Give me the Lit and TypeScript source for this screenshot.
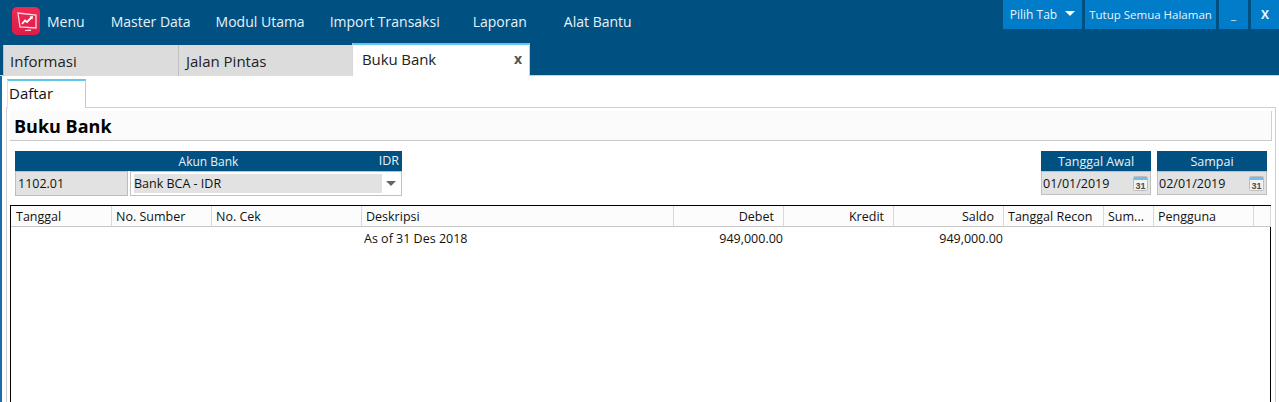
import { LitElement, html, css, svg } from "lit";
import { customElement } from "lit/decorators.js";

const columns = [
  { label: "Tanggal", w: 101 },
  { label: "No. Sumber", w: 100 },
  { label: "No. Cek", w: 150 },
  { label: "Deskripsi", w: 312 },
  { label: "Debet", w: 110, right: true },
  { label: "Kredit", w: 110, right: true },
  { label: "Saldo", w: 110, right: true },
  { label: "Tanggal Recon", w: 100 },
  { label: "Sum...", w: 50 },
  { label: "Pengguna", w: 100 },
  { label: "", w: 17 },
];

const calendar = svg`<svg class="cal" width="15" height="15" viewBox="0 0 15 15">
  <rect x="0.5" y="0.5" width="14" height="14" rx="1" fill="#f2f2f2" stroke="#bdbdbd"/>
  <rect x="1" y="1" width="13" height="3" fill="#74bdea"/>
  <text x="7.500" y="12.500" text-anchor="middle" font-size="9" font-weight="700" font-family="Liberation Sans" fill="#4a4a4a">31</text>
</svg>`;

@customElement("app-root")
export class AppRoot extends LitElement {
  static styles = css`
    :host {
      display: block;
      width: 1279px;
      height: 402px;
      overflow: hidden;
      background: #fff;
      font-family: "Open Sans", "Noto Sans", sans-serif;
      font-size: 12.5px;
      color: #111;
    }
    .top {
      height: 75px;
      background: #005082;
      border-bottom: 1px solid #d0d0d0;
      display: flex;
      flex-direction: column;
      justify-content: space-between;
    }
    .bar {
      display: flex;
      justify-content: space-between;
      align-items: flex-start;
      height: 43px;
    }
    .menu {
      display: flex;
      align-items: center;
      height: 42px;
      padding-left: 12px;
      color: #e6f3fb;
      font-size: 14px;
    }
    .logo { margin-right: 7px; }
    .m { white-space: nowrap; }
    .m1 { margin-left: 26px; }
    .m2 { margin-left: 25px; }
    .m3 { margin-left: 25px; }
    .m4 { margin-left: 33px; }
    .m5 { margin-left: 37px; }
    .actions { display: flex; gap: 3px; }
    .btn {
      height: 29px;
      background: #007cc8;
      color: #e8f4fc;
      display: flex;
      align-items: center;
      justify-content: center;
      font-size: 11.5px;
      white-space: nowrap;
    }
    .b-pilih { width: 79px; font-size: 12px; }
    .b-tutup { width: 131px; }
    .b-min { width: 29px; }
    .b-x { width: 28px; font-weight: 700; font-size: 12px; }
    .tri {
      width: 0; height: 0;
      margin-left: 8px;
      border-left: 5px solid transparent;
      border-right: 5px solid transparent;
      border-top: 5px solid #fff;
      margin-top: -2px;
    }
    .tabs {
      display: flex;
      align-items: flex-end;
      padding-left: 3px;
      height: 32px;
      margin-bottom: -1px;
    }
    .tab {
      box-sizing: border-box;
      height: 31px;
      padding-top: 1px;
      background: #dcdcdc;
      border-left: 1px solid #c0c0c0;
      font-size: 15px;
      display: flex;
      align-items: center;
      color: #222;
    }
    .t1 { width: 175px; padding-left: 6px; }
    .t2 { width: 174px; padding-left: 7px; }
    .tab.on {
      width: 178px;
      height: 33px;
      background: #fff;
      border-top: 2px solid #62c6ea;
      border-left: 1px solid #d8d8d8;
      border-right: 1px solid #d0d0d0;
      padding: 0 7px 4px 9px;
      justify-content: space-between;
      letter-spacing: -0.1px;
    }
    .close { color: #555; font-weight: 700; font-size: 14px; }
    .body {
      height: 326px;
      box-sizing: border-box;
      border-left: 2px solid #1a6ea8;
      padding: 3px 3px 0 4px;
    }
    .subtabs { display: flex; height: 29px; padding-left: 1px; }
    .subtab {
      box-sizing: border-box;
      width: 79px;
      height: 29px;
      border-top: 2px solid #62c6ea;
      border-right: 1px solid #c8c8c8;
      border-left: 1px solid #e0e0e0;
      font-size: 15px;
      padding: 2px 0 0 1px;
      background: #fff;
      position: relative;
      z-index: 1;
    }
    .panel {
      box-sizing: border-box;
      height: 300px;
      margin-top: -1px;
      border: 1px solid #cfcfcf;
      padding: 3px 3px 0 3px;
    }
    .title {
      box-sizing: border-box;
      height: 30px;
      background: #fbfbfb;
      border-bottom: 1px solid #c8c8c8;
      border-right: 1px solid #d0d0d0;
      font-size: 18px;
      font-weight: 700;
      padding: 1px 0 0 4px;
      display: flex;
      align-items: center;
      color: #000;
    }
    .filters {
      display: flex;
      justify-content: space-between;
      padding: 10px 5px 0 5px;
      box-sizing: border-box;
      margin-bottom: 9px;
      height: 55px;
    }
    .dates { display: flex; gap: 6px; }
    .head {
      height: 20px;
      background: #005082;
      color: #e6f3fb;
      display: flex;
      align-items: center;
      justify-content: center;
      position: relative;
    }
    .akun .head { font-size: 12px; }
    .idr { position: absolute; right: 3px; top: 1px; font-size: 12.5px; }
    .akun { width: 387px; }
    .akun .row { display: flex; gap: 2px; height: 25px; }
    .code {
      box-sizing: border-box;
      width: 113px;
      background: #e2e2e2;
      border: 1px solid #bdbdbd;
      padding-left: 2px;
      display: flex;
      align-items: center;
    }
    .select {
      box-sizing: border-box;
      flex: 1;
      border: 1px solid #c0c0c0;
      display: flex;
      align-items: center;
      padding: 2px 5px 2px 3px;
      gap: 4px;
    }
    .sel-val {
      flex: 1;
      height: 19px;
      background: #e2e2e2;
      display: flex;
      align-items: center;
    }
    .down {
      width: 0; height: 0;
      border-left: 5px solid transparent;
      border-right: 5px solid transparent;
      border-top: 5px solid #666;
    }
    .date { width: 110px; }
    .input {
      box-sizing: border-box;
      height: 24px;
      background: #e2e2e2;
      border: 1px solid #c0c0c0;
      display: flex;
      align-items: center;
      justify-content: space-between;
      padding: 0 2px 0 1px;
    }
    .cal { display: block; margin-top: 1px; }
    .grid {
      box-sizing: border-box;
      height: 200px;
      border: 1px solid #000;
      border-bottom: 0;
      width: 1261px;
    }
    .hrow, .drow { display: flex; }
    .hrow { height: 21px; background: #fcfcfc; }
    .h {
      box-sizing: border-box;
      flex: none;
      border-bottom: 1px solid #c8c8c8;
      border-right: 1px solid #d8d8d8;
      padding: 0 4px;
      display: flex;
      align-items: center;
      white-space: nowrap;
      overflow: hidden;
    }
    .h:first-child { padding-left: 5px; }
    .h.r { justify-content: flex-end; padding-right: 9px; }
    .drow { height: 22px; }
    .d {
      box-sizing: border-box;
      flex: none;
      padding: 0 0 0 2px;
      display: flex;
      align-items: center;
      white-space: nowrap;
    }
    .d.r { justify-content: flex-end; padding: 0 1px 0 0; }
  `;

  render() {
    const dataRow = ["", "", "", "As of 31 Des 2018", "949,000.00", "", "949,000.00", "", "", "", ""];
    return html`
      <div class="top">
        <div class="bar">
          <div class="menu">
            <svg class="logo" width="28" height="28" viewBox="0 0 28 28">
              <defs>
                <linearGradient id="lg" x1="0" y1="0" x2="0" y2="1">
                  <stop offset="0" stop-color="#f02a55"/>
                  <stop offset="1" stop-color="#dc1c48"/>
                </linearGradient>
              </defs>
              <rect width="28" height="28" rx="5" fill="url(#lg)"/>
              <path d="M6 6 L24 8 V21 L8 20 Z" fill="none" stroke="#ffd4dd" stroke-width="1.300"/>
              <path d="M10 17 L13 13.500 L15 15 L19.500 10.500" fill="none" stroke="#fff" stroke-width="1.800"/>
              <path d="M17.500 9.500 L21 9 L20.500 12.500 Z" fill="#fff"/>
              <path d="M13 23 L19 22.500 V24 H13 Z" fill="#ffd4dd"/>
            </svg>
            <span class="m">Menu</span>
            <span class="m m1">Master Data</span>
            <span class="m m2">Modul Utama</span>
            <span class="m m3">Import Transaksi</span>
            <span class="m m4">Laporan</span>
            <span class="m m5">Alat Bantu</span>
          </div>
          <div class="actions">
            <div class="btn b-pilih">Pilih Tab<span class="tri"></span></div>
            <div class="btn b-tutup">Tutup Semua Halaman</div>
            <div class="btn b-min">_</div>
            <div class="btn b-x">X</div>
          </div>
        </div>
        <div class="tabs">
          <div class="tab t1">Informasi</div>
          <div class="tab t2">Jalan Pintas</div>
          <div class="tab on"><span>Buku Bank</span><span class="close">x</span></div>
        </div>
      </div>
      <div class="body">
        <div class="subtabs"><div class="subtab">Daftar</div></div>
        <div class="panel">
          <div class="title">Buku Bank</div>
          <div class="filters">
            <div class="akun">
              <div class="head">Akun Bank<span class="idr">IDR</span></div>
              <div class="row">
                <div class="code">1102.01</div>
                <div class="select"><div class="sel-val">Bank BCA - IDR</div><span class="down"></span></div>
              </div>
            </div>
            <div class="dates">
              <div class="date"><div class="head">Tanggal Awal</div><div class="input">01/01/2019 ${calendar}</div></div>
              <div class="date"><div class="head">Sampai</div><div class="input">02/01/2019 ${calendar}</div></div>
            </div>
          </div>
          <div class="grid">
            <div class="hrow">
              ${columns.map((c) => html`<div class="h ${c.right ? "r" : ""}" style="width:${c.w}px">${c.label}</div>`)}
            </div>
            <div class="drow">
              ${columns.map((c, i) => html`<div class="d ${c.right ? "r" : ""}" style="width:${c.w}px">${dataRow[i]}</div>`)}
            </div>
          </div>
        </div>
      </div>
    `;
  }
}
